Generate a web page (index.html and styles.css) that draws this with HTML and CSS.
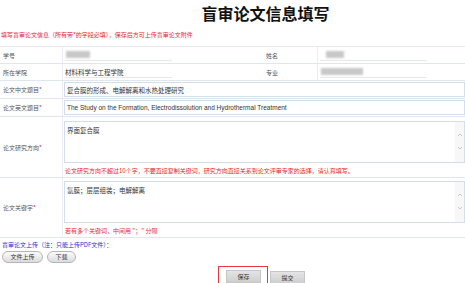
FILE: index.html
```html
<!DOCTYPE html>
<html lang="zh-CN">
  <head>
    <meta charset="UTF-8" />
    <meta name="viewport" content="width=device-width, initial-scale=1.0" />
    <title>盲审论文信息填写</title>
    <link rel="stylesheet" href="styles.css">
  </head>
  <body>
    <h1 class="title">盲审论文信息填写</h1>
    <p class="note">填写盲审论文信息（所有带*的字段必填），保存后方可上传盲审论文附件</p>
    <div class="form">
      <div class="row two">
        <div class="label">学号</div>
        <div class="cell"><span class="line"><span class="blur w24"></span></span></div>
        <div class="label">姓名</div>
        <div class="cell"><span class="line"><span class="blur w18 gap"></span></span></div>
      </div>
      <div class="row two">
        <div class="label">所在学院</div>
        <div class="cell"><span class="line">材料科学与工程学院</span></div>
        <div class="label">专业</div>
        <div class="cell"><span class="line"><span class="blur w40"></span></span></div>
      </div>
      <div class="row r-input">
        <div class="label">论文中文题目<em>*</em></div>
        <div class="cell"><span class="box">复合膜的形成、电解解离和水热处理研究</span></div>
      </div>
      <div class="row r-input">
        <div class="label">论文英文题目<em>*</em></div>
        <div class="cell"><span class="box en">The Study on the Formation, Electrodissolution and Hydrothermal Treatment</span></div>
      </div>
      <div class="row r-area first">
        <div class="label">论文研究方向<em>*</em></div>
        <div class="cell col">
          <div class="area">
            <div class="area-text">界面复合膜</div>
            <div class="scroll">
              <svg width="6" height="4" viewBox="0 0 6 4"><path d="M1 3 L3 1 L5 3" fill="none" stroke="#bbb" stroke-width="0.8"/></svg>
              <svg width="6" height="4" viewBox="0 0 6 4"><path d="M1 1 L3 3 L5 1" fill="none" stroke="#bbb" stroke-width="0.8"/></svg>
            </div>
          </div>
          <div class="hint">论文研究方向不超过10个字，不要直接复制关键词，研究方向直接关系到论文评审专家的选择，请认真填写。</div>
        </div>
      </div>
      <div class="row r-area">
        <div class="label">论文关键字<em>*</em></div>
        <div class="cell col">
          <div class="area">
            <div class="area-text">氩膜；层层组装；电解解离</div>
            <div class="scroll">
              <svg width="6" height="4" viewBox="0 0 6 4"><path d="M1 3 L3 1 L5 3" fill="none" stroke="#bbb" stroke-width="0.8"/></svg>
              <svg width="6" height="4" viewBox="0 0 6 4"><path d="M1 1 L3 3 L5 1" fill="none" stroke="#bbb" stroke-width="0.8"/></svg>
            </div>
          </div>
          <div class="hint">若有多个关键词，中间用 "；" 分隔</div>
        </div>
      </div>
    </div>
    <p class="upload">盲审论文上传（注：只能上传PDF文件）：</p>
    <div class="pills">
      <span class="pill p-upload">文件上传</span>
      <span class="pill p-down">下载</span>
    </div>
    <div class="actions">
      <span class="save-wrap"><span class="btn">保存</span></span>
      <span class="btn">提交</span>
    </div>
  </body>
</html>
```

FILE: styles.css
```css
body {
  margin: 0;
  font-family: "Noto Sans CJK SC", "Noto Sans", sans-serif;
  font-size: 6px;
  color: #444;
  background: #fff;
  overflow: hidden;
}
.title {
  margin: 0 0 0 66px;
  padding-top: 3px;
  text-align: center;
  font-size: 16px;
  line-height: 20px;
  font-weight: bold;
  color: #111;
}
.note {
  margin: 8px 0 0 1px;
  line-height: 8px;
  color: #e8262a;
}
/* form table */
.form {
  margin-top: 7px;
  border-top: 1px solid #e6e9ef;
}
.row {
  display: grid;
  grid-template-columns: 63px 1fr;
  border-bottom: 1px solid #e0e6ef;
  height: 17px;
}
.row.two {
  grid-template-columns: 63px 200px 55px 1fr;
  height: 16px;
}
.row.r-input {
  height: 17px;
}
.row.r-area {
  height: 59px;
}
.row.r-area.first {
  height: 60px;
}
.label {
  display: flex;
  align-items: center;
  padding-left: 3px;
  border-right: 1px solid #eaedf1;
  color: #555;
}
.label em {
  font-style: normal;
  color: #e8262a;
}
.cell {
  display: flex;
  align-items: center;
  min-width: 0;
}
.cell.col {
  flex-direction: column;
  align-items: stretch;
  justify-content: flex-start;
  padding-top: 3px;
}
.r-area.first .cell.col {
  padding-top: 4px;
}
.line {
  display: flex;
  align-items: center;
  width: 107px;
  height: 11px;
  margin-left: 2px;
  border-bottom: 1px solid #e8e8e8;
  font-size: 6.5px;
  color: #333;
}
.blur {
  display: inline-block;
  height: 7px;
  margin-left: 1px;
  background: #c8c8c8;
  filter: blur(1.2px);
}
.blur.w24 { width: 24px; }
.blur.w18 { width: 18px; }
.blur.w40 { width: 42px; }
.blur.gap { margin-left: 6px; }
.box {
  flex: 1;
  height: 13px;
  margin-left: 1px;
  padding-left: 2px;
  display: flex;
  align-items: center;
  border: 1px solid #d3deeb;
  font-size: 6.5px;
  color: #333;
  white-space: nowrap;
  overflow: hidden;
}
.box.en {
  font-family: "Liberation Sans", Arial, sans-serif;
  font-size: 6.5px;
}
.area {
  display: flex;
  height: 40px;
  margin-left: 1px;
  border: 1px solid #d3deeb;
}
.area-text {
  flex: 1;
  padding: 3px 2px;
  font-size: 6.5px;
  color: #333;
}
.scroll {
  width: 9px;
  background: #f7f7f7;
  display: flex;
  flex-direction: column;
  align-items: center;
  justify-content: space-between;
  padding: 11px 0 12px;
}
.hint {
  margin-top: 4px;
  margin-left: 2px;
  line-height: 8px;
  color: #e8262a;
}
/* bottom */
.upload {
  margin: 3px 0 0 2px;
  line-height: 8px;
  color: #2233cc;
}
.pills {
  display: flex;
  gap: 4px;
  margin: 2px 0 0 2px;
}
.pill {
  height: 10px;
  line-height: 10px;
  border: 1px solid #b5b5b5;
  border-radius: 6px;
  background: linear-gradient(#fbfbfb, #dcdcdc);
  text-align: center;
  color: #333;
}
.p-upload { width: 39px; }
.p-down { width: 27px; }
.actions {
  display: flex;
  align-items: center;
  gap: 2px;
  margin: 3px 0 0 218px;
}
.save-wrap {
  border: 1.5px solid #e53935;
  padding: 3px 6px 4px 7px;
}
.btn {
  display: inline-block;
  width: 33px;
  height: 11px;
  line-height: 11px;
  text-align: center;
  background: linear-gradient(#e4e4e4, #cfcfcf);
  border: 1px solid #c6c6c6;
  color: #333;
}
```
